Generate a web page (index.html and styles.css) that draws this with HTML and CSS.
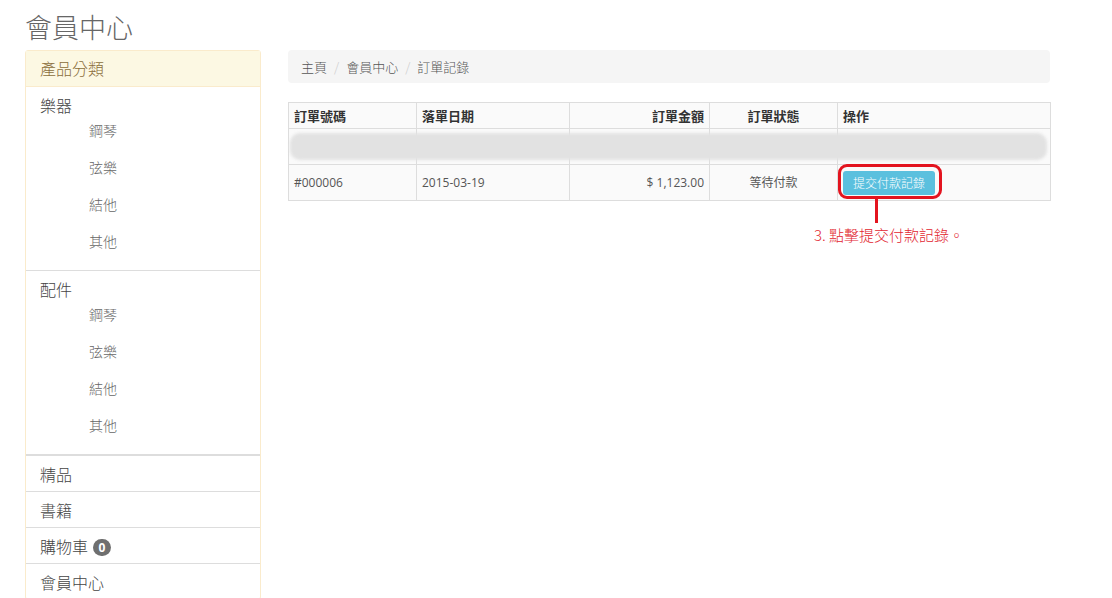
FILE: index.html
```html
<!DOCTYPE html>
<html>
<head>
<meta charset="utf-8">
<title>會員中心</title>
<link rel="stylesheet" href="styles.css">
</head>
<body>

<h1 class="page-title">會員中心</h1>

<div class="layout">
    <div class="side-panel">
        <div class="side-heading">產品分類</div>
        <div class="side-group">
            <div class="group-label">樂器</div>
            <ul class="sub-list">
                <li>鋼琴</li>
                <li>弦樂</li>
                <li>結他</li>
                <li>其他</li>
            </ul>
        </div>
        <div class="side-group">
            <div class="group-label">配件</div>
            <ul class="sub-list">
                <li>鋼琴</li>
                <li>弦樂</li>
                <li>結他</li>
                <li>其他</li>
            </ul>
        </div>
        <div class="side-item first">精品</div>
        <div class="side-item">書籍</div>
        <div class="side-item">購物車 <span class="badge">0</span></div>
        <div class="side-item">會員中心</div>
    </div>

    <div class="main">
        <ol class="breadcrumb">
            <li>主頁</li>
            <li>會員中心</li>
            <li>訂單記錄</li>
        </ol>

        <div class="table-wrap">
            <table class="orders">
                <colgroup>
                    <col style="width:128px">
                    <col style="width:153px">
                    <col style="width:140px">
                    <col style="width:128px">
                    <col style="width:213px">
                </colgroup>
                <thead>
                    <tr>
                        <th>訂單號碼</th>
                        <th>落單日期</th>
                        <th class="right">訂單金額</th>
                        <th class="center">訂單狀態</th>
                        <th>操作</th>
                    </tr>
                </thead>
                <tbody>
                    <tr>
                        <td></td>
                        <td></td>
                        <td></td>
                        <td></td>
                        <td></td>
                    </tr>
                    <tr>
                        <td>#000006</td>
                        <td>2015-03-19</td>
                        <td class="right">$ 1,123.00</td>
                        <td class="center">等待付款</td>
                        <td>
                            <span class="pay-wrap">
                                <button class="pay-btn">提交付款記錄</button>
                                <span class="ring"></span>
                                <span class="pointer"></span>
                                <span class="note">3. 點擊提交付款記錄。</span>
                            </span>
                        </td>
                    </tr>
                </tbody>
            </table>
            <div class="blur-mask"></div>
        </div>
    </div>
</div>

</body>
</html>
```

FILE: styles.css
```css
body {
    font-family: "Noto Sans CJK TC", "Noto Sans", sans-serif;
    font-weight: 300;
    background-color: #fff;
    color: #333;
    margin: 0;
    padding: 0;
}
.page-title {
    font-size: 27px;
    font-weight: 300;
    line-height: 30px;
    color: #666;
    margin: 12px 0 8px 25px;
}
.layout {
    display: grid;
    grid-template-columns: 236px 762px;
    column-gap: 27px;
    padding-left: 25px;
    padding-bottom: 40px;
}

/* sidebar */
.side-panel {
    border: 1px solid #faebcc;
    border-radius: 3px;
    background-color: #fff;
}
.side-heading {
    background-color: #fcf8e3;
    color: #8a6d3b;
    font-size: 16px;
    line-height: 20px;
    padding: 7px 14px 8px;
    border-bottom: 1px solid #faebcc;
}
.side-group {
    padding: 9px 14px 8px;
}
.side-group + .side-group {
    border-top: 1px solid #ddd;
}
.group-label {
    font-size: 16px;
    line-height: 18px;
    color: #444;
}
.sub-list {
    list-style: none;
    margin: -2px 0 2px;
    padding: 0 0 0 49px;
}
.sub-list li {
    font-size: 14px;
    line-height: 37px;
    color: #666;
}
.side-item {
    font-size: 16px;
    line-height: 20px;
    padding: 8px 14px 7px;
    border-top: 1px solid #ddd;
    color: #444;
}
.side-item.first {
    border-top: 2px solid #ddd;
}
.badge {
    display: inline-block;
    background-color: #6f6f6f;
    color: #fff;
    font-family: "Open Sans", sans-serif;
    font-size: 12px;
    font-weight: bold;
    line-height: 17px;
    padding: 0 6px;
    border-radius: 9px;
    vertical-align: 1px;
    margin-left: 1px;
}

/* main */
.breadcrumb {
    list-style: none;
    margin: 0 0 19px;
    padding: 8px 13px;
    background-color: #f5f5f5;
    border-radius: 4px;
    display: flex;
    font-size: 13px;
    line-height: 17px;
    color: #555;
}
.breadcrumb li + li::before {
    content: "/";
    color: #ccc;
    padding: 0 7px;
}
.table-wrap {
    position: relative;
}
.orders {
    width: 762px;
    table-layout: fixed;
    border-collapse: collapse;
    background-color: #fafafa;
    font-size: 12px;
    color: #555;
}
.orders th, .orders td {
    border: 1px solid #ddd;
    padding: 4px 5px;
    text-align: left;
}
.orders th {
    font-size: 13px;
    line-height: 17px;
    font-weight: bold;
    color: #333;
}
.orders td {
    height: 27px;
    line-height: 17px;
    font-family: "Open Sans", "Noto Sans CJK TC", sans-serif;
    font-weight: normal;
}
.orders .right {
    text-align: right;
}
.orders .center {
    text-align: center;
}
.blur-mask {
    position: absolute;
    top: 31px;
    left: 2px;
    right: 3px;
    height: 27px;
    background-color: #e2e2e2;
    border-radius: 10px;
    filter: blur(1.5px);
}

/* pay button + callout */
.pay-wrap {
    position: relative;
    display: inline-block;
    vertical-align: middle;
}
.pay-btn {
    display: block;
    background-color: #5bc0de;
    color: #fff;
    border: none;
    border-radius: 3px;
    font-family: "Noto Sans CJK TC", sans-serif;
    font-weight: 300;
    font-size: 12px;
    line-height: 24px;
    height: 24px;
    width: 92px;
    padding: 0;
    cursor: pointer;
}
.ring {
    position: absolute;
    top: -7px;
    left: -5px;
    right: -7px;
    bottom: -4px;
    border: 3px solid #e3141f;
    border-radius: 9px;
}
.pointer {
    position: absolute;
    left: 32px;
    top: 28px;
    width: 3px;
    height: 24px;
    background-color: #e3141f;
}
.note {
    position: absolute;
    left: -29px;
    top: 54px;
    white-space: nowrap;
    font-family: "Noto Sans CJK TC", sans-serif;
    font-weight: 300;
    font-size: 15px;
    line-height: 20px;
    color: #e2262f;
}
```
